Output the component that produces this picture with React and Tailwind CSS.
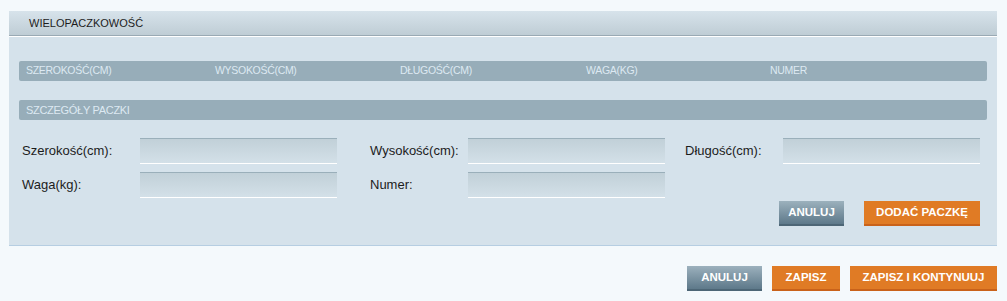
const columns = [
  { label: 'SZEROKOŚĆ(CM)', w: 'w-[189px]' },
  { label: 'WYSOKOŚĆ(CM)', w: 'w-[185px]' },
  { label: 'DŁUGOŚĆ(CM)', w: 'w-[186px]' },
  { label: 'WAGA(KG)', w: 'w-[184px]' },
  { label: 'NUMER', w: 'w-[100px]' },
];

function Field() {
  return (
    <div className="h-[26px] w-[197px] border-t border-b border-t-[#9aafba] border-b-white bg-gradient-to-b from-[#c1d0d8] to-[#d3e0e8]" />
  );
}

function GreyButton({ children, className = '' }) {
  return (
    <button
      type="button"
      className={`h-[25px] border-b-2 border-[#4d6676] bg-gradient-to-b from-[#9cb1bd] to-[#5e798a] text-[11.5px] font-bold text-white ${className}`}
    >
      {children}
    </button>
  );
}

function OrangeButton({ children, className = '' }) {
  return (
    <button
      type="button"
      className={`h-[25px] border-b-2 border-[#c9621a] bg-[#e07b25] text-[11.5px] font-bold text-white ${className}`}
    >
      {children}
    </button>
  );
}

export default function App() {
  return (
    <div className="min-h-[301px] w-[1007px] bg-[#f4f9fc] pl-[9px] pr-[10px] pt-[11px] font-['Liberation_Sans',Arial,sans-serif]">
      <div className="border-b border-[#b6cee2] bg-[#d5e2eb]">
        <div className="flex h-[25px] items-center border-b border-[#9aaab4] bg-gradient-to-b from-[#d7e3eb] to-[#bfcdd5] pl-5 text-[11px] text-[#1d1d1d]">
          WIELOPACZKOWOŚĆ
        </div>
        <div className="h-px bg-white" />

        <div className="px-[10px] pb-[19px] pt-6">
          <div className="flex h-5 items-center rounded-[2px] bg-[#97adb9] pl-[7px] text-[10.5px] tracking-[-0.3px] text-[#dde9f2]">
            {columns.map((c) => (
              <span key={c.label} className={c.w}>
                {c.label}
              </span>
            ))}
          </div>

          <div className="mt-[19px] flex h-5 items-center rounded-[2px] bg-[#97adb9] pl-[7px] text-[11px] tracking-[-0.3px] text-[#dde9f2]">
            SZCZEGÓŁY PACZKI
          </div>

          <div className="mt-[18px] flex flex-col gap-2 text-[13px] text-[#1c1c1c]">
            <div className="flex items-center">
              <span className="w-[121px] pl-[3px]">Szerokość(cm):</span>
              <Field />
              <span className="ml-[33px] w-[98px]">Wysokość(cm):</span>
              <Field />
              <span className="ml-5 w-[98px]">Długość(cm):</span>
              <Field />
            </div>
            <div className="flex items-center">
              <span className="w-[121px] pl-[3px]">Waga(kg):</span>
              <Field />
              <span className="ml-[33px] w-[98px]">Numer:</span>
              <Field />
            </div>
          </div>

          <div className="mt-[3px] flex justify-end gap-5 pr-[7px]">
            <GreyButton className="w-[65px]">ANULUJ</GreyButton>
            <OrangeButton className="w-[116px]">DODAĆ PACZKĘ</OrangeButton>
          </div>
        </div>
      </div>

      <div className="mt-5 flex justify-end gap-[10px]">
        <GreyButton className="w-[75px]">ANULUJ</GreyButton>
        <OrangeButton className="w-[68px]">ZAPISZ</OrangeButton>
        <OrangeButton className="w-[147px]">ZAPISZ I KONTYNUUJ</OrangeButton>
      </div>
    </div>
  );
}
